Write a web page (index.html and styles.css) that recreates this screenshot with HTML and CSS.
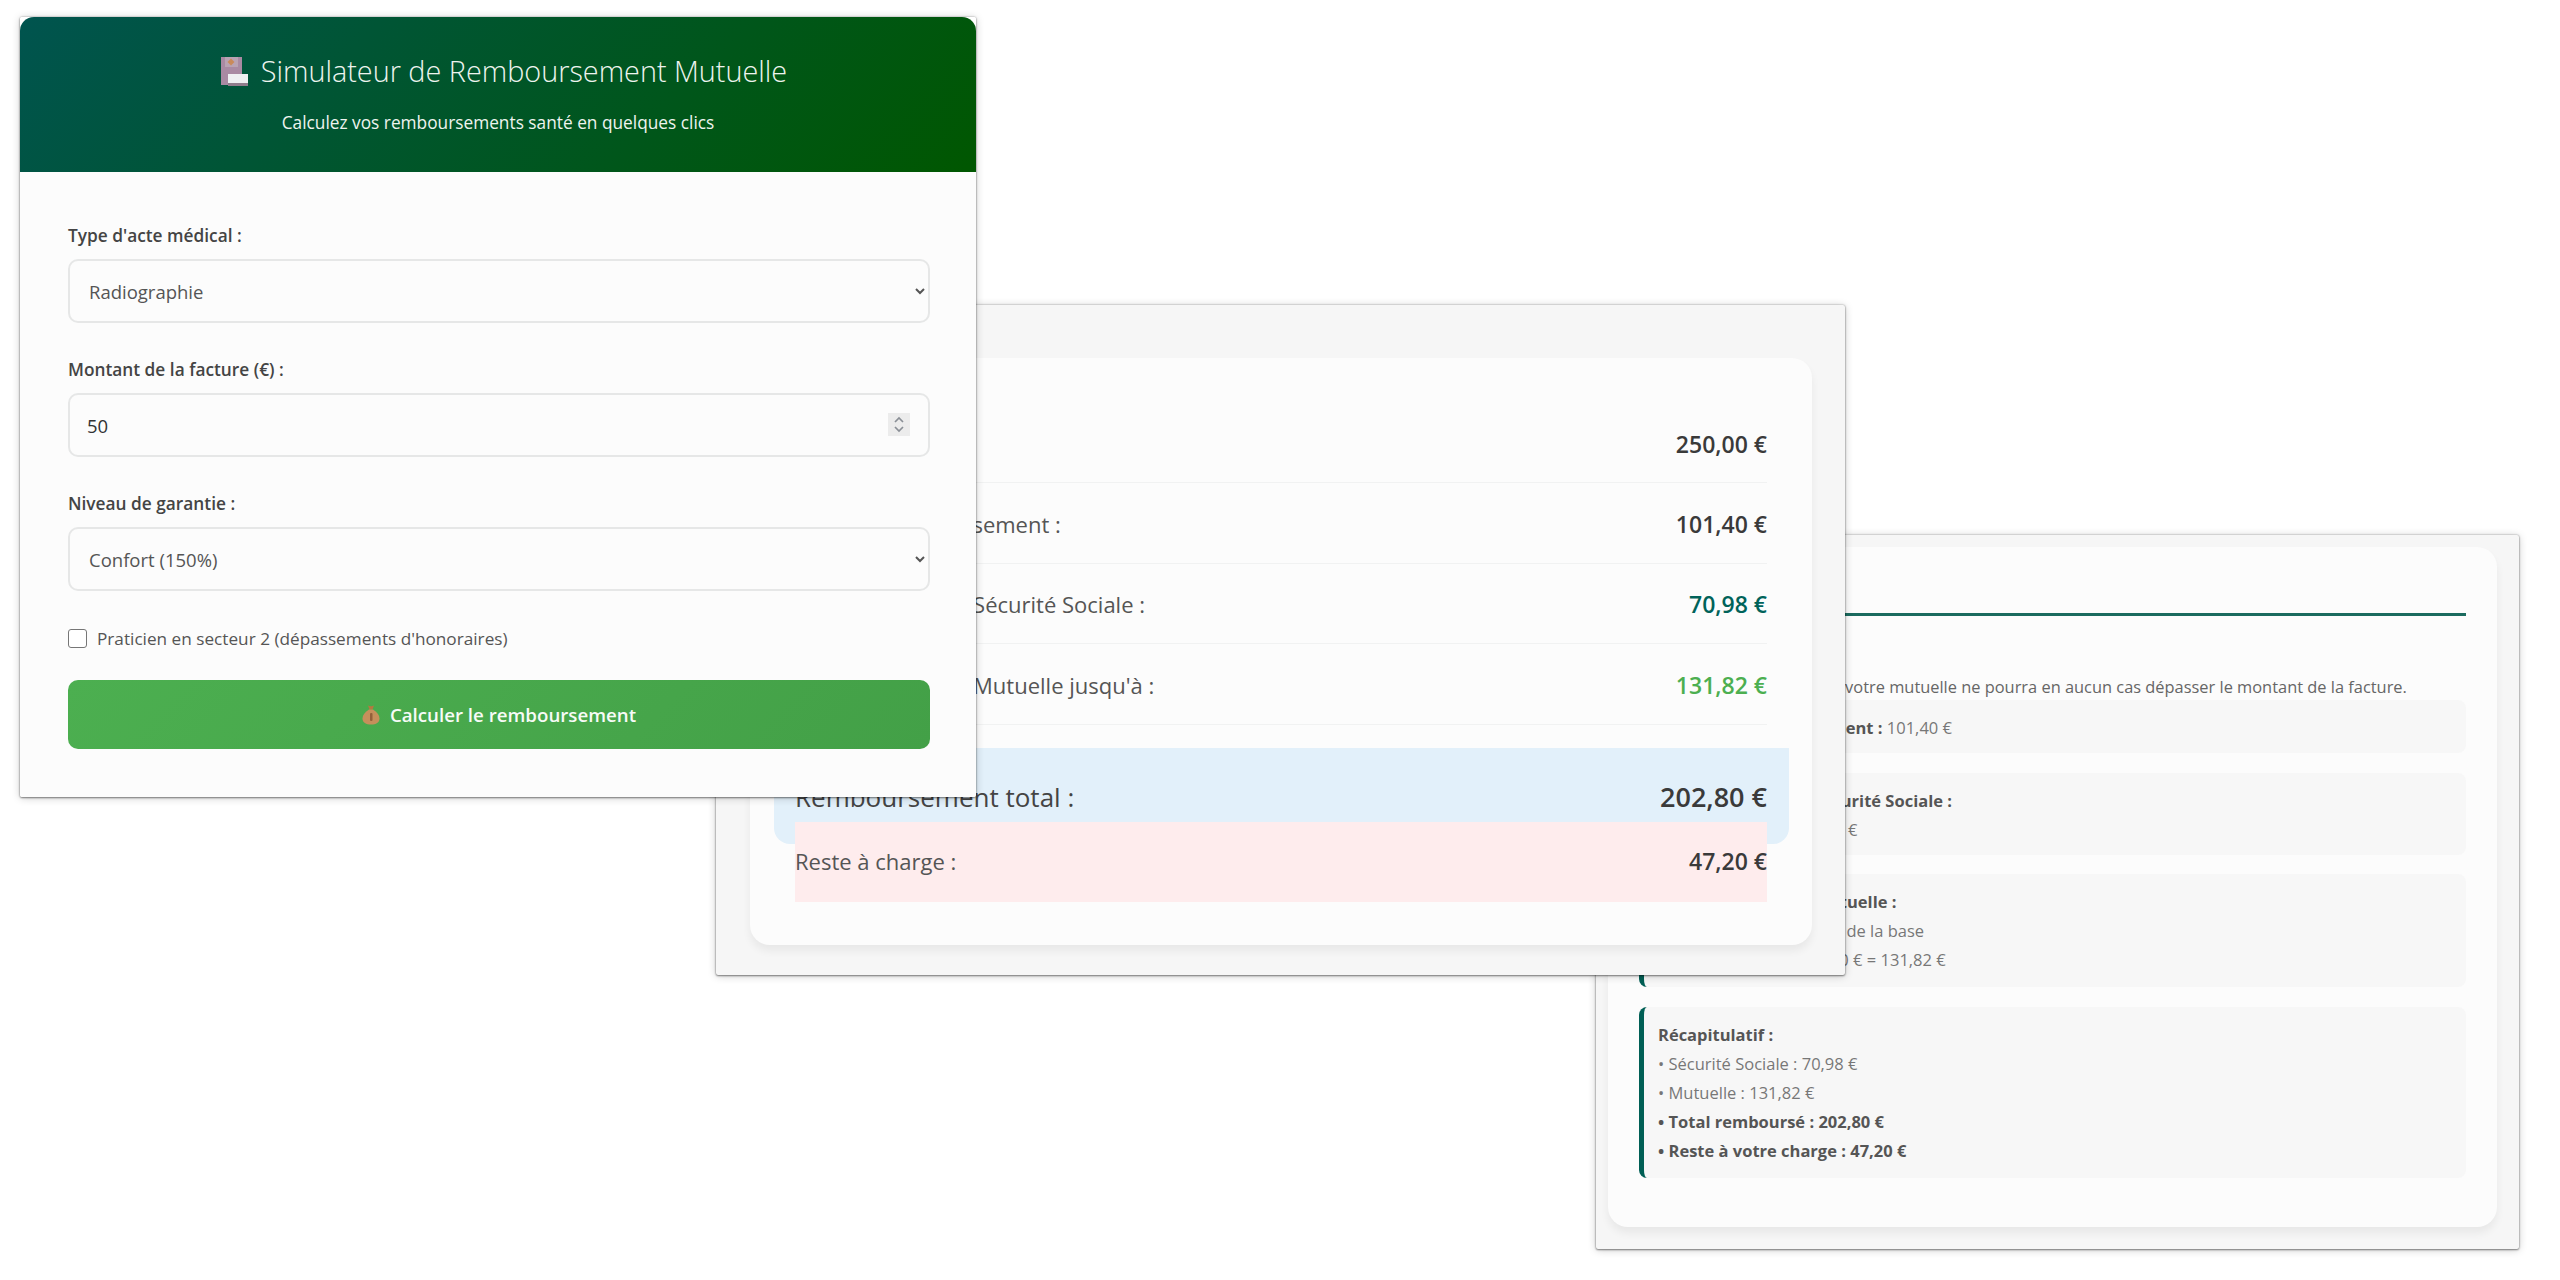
FILE: index.html
```html
<!DOCTYPE html>
<html lang="fr">
<head>
<meta charset="utf-8">
<title>Simulateur de Remboursement Mutuelle</title>
<link rel="stylesheet" href="styles.css">
</head>
<body>
<main class="desk">
  <section class="win win-detail">
    <div class="card card-detail">
      <h3 class="detail-title">Détail du calcul</h3>
      <p class="note">NB : le remboursement de votre mutuelle ne pourra en aucun cas dépasser le montant de la facture.</p>
      <div class="step"><p><strong><span class="num">1.</span> Base de remboursement :</strong> 101,40 €</p></div>
      <div class="step"><p><strong><span class="num">2.</span> Remboursement Sécurité Sociale :</strong></p><p>70% de 101,40 € = 70,98 €</p></div>
      <div class="step step-lg"><p><strong><span class="num">3.</span> Remboursement Mutuelle :</strong></p><p>Garantie Confort : 130% de la base</p><p>Garantie : 130% × 101,40 € = 131,82 €</p></div>
      <div class="step step-lg"><p><strong>Récapitulatif :</strong></p><p>• Sécurité Sociale : 70,98 €</p><p>• Mutuelle : 131,82 €</p><p><strong>• Total remboursé : 202,80 €</strong></p><p><strong>• Reste à votre charge : 47,20 €</strong></p></div>
    </div>
  </section>

  <section class="win win-result">
    <div class="card card-result">
      <div class="row"><span>Montant total :</span><b>250,00 €</b></div>
      <div class="row"><span>Base de remboursement :</span><b>101,40 €</b></div>
      <div class="row"><span>Remboursement Sécurité Sociale :</span><b class="teal">70,98 €</b></div>
      <div class="row"><span>Remboursement Mutuelle jusqu'à :</span><b class="green">131,82 €</b></div>
      <div class="total"><span>Remboursement total :</span><b>202,80 €</b></div>
      <div class="rest"><span>Reste à charge :</span><b>47,20 €</b></div>
    </div>
  </section>

  <section class="win win-form">
    <header class="head">
      <h1 class="head-title">
        <svg class="ico-hospital" viewBox="0 0 28 30" aria-hidden="true">
          <rect x="1" y="1" width="21" height="28" fill="#a98aa3"/>
          <rect x="5" y="1" width="13" height="10" fill="#b9a3b3"/>
          <path d="M11 2.500l3.500 3.500-3.500 3.500-3.500-3.500z" fill="#c98a5a"/>
          <rect x="8" y="18" width="20" height="9" fill="#eef0f2"/>
          <rect x="8" y="27" width="20" height="3" fill="#8f7d8c"/>
        </svg>
        <span>Simulateur de Remboursement Mutuelle</span>
      </h1>
      <p class="head-sub">Calculez vos remboursements santé en quelques clics</p>
    </header>
    <form class="form">
      <label class="lbl" for="acte">Type d'acte médical :</label>
      <select class="field" id="acte"><option>Radiographie</option></select>
      <label class="lbl" for="montant">Montant de la facture (€) :</label>
      <div class="num-wrap">
        <input class="field field-num" id="montant" type="number" value="50">
        <span class="spin"><svg viewBox="0 0 22 23" aria-hidden="true"><path d="M7 9l4-4 4 4M7 14l4 4 4-4" fill="none" stroke="#8a8f96" stroke-width="1.700"/></svg></span>
      </div>
      <label class="lbl" for="niveau">Niveau de garantie :</label>
      <select class="field" id="niveau"><option>Confort (150%)</option></select>
      <label class="check"><input class="check-box" type="checkbox"><span>Praticien en secteur 2 (dépassements d'honoraires)</span></label>
      <button class="btn" type="button">
        <svg class="ico-bag" viewBox="0 0 18 21" aria-hidden="true">
          <path d="M6 1.500c1.500 1 4.500 1 6 0l-1.500 4h-3z" fill="#b5793f"/>
          <path d="M7 5.500h4c4 2.500 6.500 5.500 6.500 9 0 4-3.500 6-8.500 6s-8.500-2-8.500-6c0-3.500 2.500-6.500 6.500-9z" fill="#c68f5b"/>
          <rect x="8" y="9" width="2.500" height="8" rx="1" fill="#94603a"/>
        </svg>
        <span>Calculer le remboursement</span>
      </button>
    </form>
  </section>
</main>
</body>
</html>
```
FILE: styles.css
```css
* { box-sizing: border-box; }
html, body { margin: 0; padding: 0; background: #fff; }
body { font-family: "Open Sans", "Noto Sans", "Liberation Sans", sans-serif; color: #444; }
.desk { position: relative; width: 2560px; height: 1280px; overflow: hidden; }

.win {
  position: absolute;
  border-radius: 2px;
  box-shadow: 0 1px 2px rgba(0,0,0,.4), 0 0 2px rgba(0,0,0,.35), 0 1px 9px rgba(0,0,0,.2);
}
.win-form { left: 20px; top: 17px; width: 956px; height: 780px; background: linear-gradient(#fff 0, #fff 20px, #fcfcfc 20px); z-index: 3; }
.win-result { left: 716px; top: 305px; width: 1129px; height: 670px; background: #f6f6f6; padding: 53px 33px 30px 34px; z-index: 2; }
.win-detail { left: 1596px; top: 535px; width: 923px; height: 714px; background: #f6f6f6; padding: 12px 22px 22px 12px; z-index: 1; }

.head {
  height: 155px;
  border-radius: 14px 14px 0 0;
  background: linear-gradient(135deg, #00544f 0%, #005700 100%);
  color: #eef4ef;
  text-align: center;
  padding-top: 33px;
}
.head-title {
  margin: 0;
  display: flex;
  justify-content: center;
  align-items: center;
  gap: 13px;
  font-size: 28.800px;
  line-height: 42px;
  font-weight: 300;
  padding-left: 11px;
}
.ico-hospital { width: 28px; height: 30px; flex: none; }
.head-sub { margin: 19px 0 0; font-size: 17.300px; line-height: 24px; }

.form { display: flex; flex-direction: column; padding: 52px 46px 48px 48px; }
.lbl { font-size: 17.300px; font-weight: 600; line-height: 24px; color: #444; margin-bottom: 11px; }
.field {
  display: block;
  width: 100%;
  height: 64px;
  margin-bottom: 35px;
  padding: 0 15px;
  border: 2px solid #e6e7e7;
  border-radius: 10px;
  background: #fcfcfc;
  font-family: inherit;
  font-size: 18.500px;
  color: #555;
  outline: none;
}
.num-wrap { position: relative; }
.field-num { color: #333; appearance: textfield; padding: 0 17px; }
.field-num::-webkit-inner-spin-button { display: none; }
.spin { position: absolute; right: 20px; top: 20px; width: 22px; height: 23px; background: #ececec; }
.spin svg { display: block; width: 22px; height: 23px; }

.check { display: flex; align-items: center; gap: 10px; height: 24px; margin-bottom: 30px; font-size: 17.200px; color: #555; }
.check-box { appearance: none; width: 19px; height: 19px; margin: 0; border: 1.500px solid #767676; border-radius: 3px; background: #fff; flex: none; }

.btn {
  display: flex;
  justify-content: center;
  align-items: center;
  gap: 10px;
  height: 69px;
  border: 0;
  border-radius: 10px;
  background: linear-gradient(135deg, #4caf50 0%, #43a047 100%);
  color: #f7fbf7;
  font-family: inherit;
  font-size: 18.700px;
  font-weight: 600;
}
.ico-bag { width: 18px; height: 21px; flex: none; }

.card { height: 100%; background: #fcfcfc; border-radius: 20px; box-shadow: 0 6px 8px rgba(0,0,0,.06); }
.card-result { padding: 45px 45px; }
.row {
  display: flex;
  justify-content: space-between;
  align-items: center;
  height: 80.400px;
  padding-top: 2px;
  border-bottom: 1.500px solid #f1f2f2;
  font-size: 22px;
  font-weight: 500;
  color: #555;
}
.row b, .rest b { font-size: 23px; font-weight: 600; color: #3a3a3a; }
.row b.teal { color: #00635a; }
.row b.green { color: #4caf50; }
.total {
  display: flex;
  justify-content: space-between;
  margin: 23px -22px 0 -21px;
  height: 96px;
  padding: 31px 22px 0 21px;
  background: #e2f0fa;
  border-radius: 0 0 16px 16px;
  font-size: 26px;
  font-weight: 500;
  line-height: 36px;
  color: #444;
}
.total b { font-size: 27px; font-weight: 600; color: #3a3a3a; }
.rest {
  position: relative;
  display: flex;
  justify-content: space-between;
  align-items: center;
  height: 80px;
  margin-top: -22px;
  padding-bottom: 2px;
  background: #feeced;
  font-size: 22px;
  font-weight: 500;
  color: #555;
}

.card-detail { padding: 30px 31px; }
.detail-title { margin: 0; padding-bottom: 5.500px; border-bottom: 3px solid #1b6b5f; font-size: 22px; line-height: 30px; font-weight: 600; color: #00635a; }
.note { margin: 58.500px 0 0; font-size: 16.400px; line-height: 26px; color: #666; white-space: nowrap; }
.step { padding: 13px 16px 11px 14px; margin-bottom: 19.500px; background: #f7f7f7; border-radius: 8px; border-left: 5px solid #005f55; font-size: 16.500px; line-height: 29px; color: #777; }
.step-lg { padding-bottom: 13px; }
.step p { margin: 0; white-space: nowrap; }
.step strong { font-weight: 700; color: #555; }
.num { letter-spacing: -2.500px; }
```
